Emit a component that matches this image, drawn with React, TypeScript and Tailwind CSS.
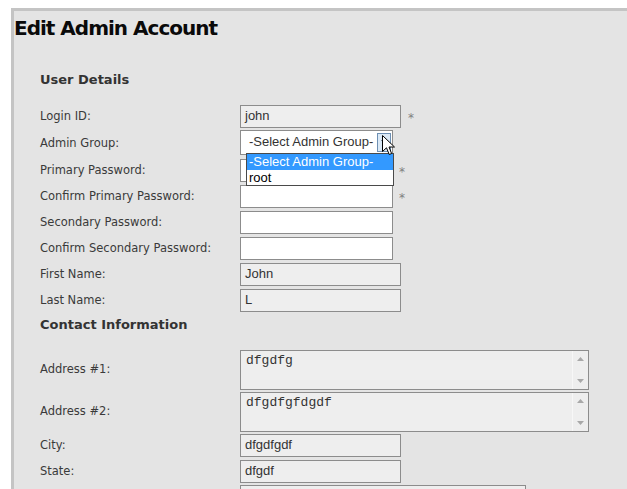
import React from "react";

const label = "w-[200px] shrink-0 mt-[2px] text-[11.5px] text-[#3a3a3a] [font-family:'DejaVu_Sans',Verdana,sans-serif]";
const inputFont = "[font-family:'Liberation_Sans',Arial,sans-serif] text-[13px] text-[#333]";

function TextBox({ value, w, white }: { value?: string; w: string; white?: boolean }) {
  return (
    <div
      className={`${w} h-[23px] border border-[#8c8c8c] ${white ? "bg-white" : "bg-[#eeeeee]"} pl-[4px] flex items-center ${inputFont}`}
    >
      {value}
    </div>
  );
}

function Star({ ml }: { ml: string }) {
  return <span className={`${ml} text-[12px] text-[#808080] [font-family:'DejaVu_Sans',sans-serif] self-start mt-[6px]`}>*</span>;
}

function Area({ value }: { value: string }) {
  return (
    <div className="w-[349px] h-[40px] border border-[#8c8c8c] bg-[#eeeeee] flex mt-[1px]">
      <div className="flex-1 pl-[5px] pt-[2px] text-[13px] leading-[16px] text-[#333] [font-family:'Liberation_Mono','Courier_New',monospace]">
        {value}
      </div>
      <div className="w-[16px] border-l border-[#f7f7f7] flex flex-col items-center justify-between py-[6px]">
        <svg width="7" height="4" viewBox="0 0 7 4"><path d="M3.5 0L7 4H0z" fill="#a8a8a8" /></svg>
        <svg width="7" height="4" viewBox="0 0 7 4"><path d="M0 0h7L3.5 4z" fill="#a8a8a8" /></svg>
      </div>
    </div>
  );
}

export default function App() {
  return (
    <div className="min-h-screen bg-white pt-[8px] pl-[11px] overflow-hidden">
      <div className="border-t-[3px] border-l-[3px] border-[#c4c4c4] bg-[#e4e4e4] min-h-[481px]">
        <h1 className="pt-[5px] text-[20px] leading-[24px] font-bold text-[#0a0a0a] tracking-[-1px] [font-family:'DejaVu_Sans',Verdana,sans-serif]">
          Edit Admin Account
        </h1>
        <div className="pl-[26px]">
          <div className="mt-[32px] h-[16px] leading-[16px] text-[13px] font-bold text-[#333] [font-family:'DejaVu_Sans',Verdana,sans-serif]">
            User Details
          </div>
          <div className="mt-[15px] flex flex-col">
            <div className="h-[26px] flex items-center">
              <span className={label}>Login ID:</span>
              <TextBox value="john" w="w-[161px]" />
              <Star ml="ml-[7px]" />
            </div>
            <div className="h-[28px] flex items-center">
              <span className={label}>Admin Group:</span>
              <div className="relative w-[153px] h-[25px] -mt-[2px] border border-[#8c8c8c] bg-white flex items-center">
                <span className={`pl-[8px] ${inputFont} text-[#111]`}>-Select Admin Group-</span>
                <div className="absolute right-[1px] top-[2px] w-[14px] h-[19px] bg-[#dbe9f6] border border-[#6d8fb3] flex items-center justify-center">
                  <svg width="7" height="4" viewBox="0 0 7 4"><path d="M0 0h7L3.5 4z" fill="#3a4a5a" /></svg>
                </div>
                <svg className="absolute left-[141px] top-[4px] z-30" width="13" height="21" viewBox="0 0 13 21">
                  <path d="M0.5 0.5V16.5L4.5 12.8L7.2 19.5L9.6 18.5L7 12H12.5Z" fill="white" stroke="black" strokeWidth="1" strokeLinejoin="miter" />
                </svg>
                <div className="absolute left-[5px] top-[22px] w-[148px] border border-[#4a4a4a] bg-white z-20">
                  <div className="h-[16px] leading-[16px] pl-[2px] bg-[#3399ff] text-white [font-family:'Liberation_Sans',Arial,sans-serif] text-[13px]">
                    -Select Admin Group-
                  </div>
                  <div className="h-[15px] leading-[15px] pl-[2px] text-black [font-family:'Liberation_Sans',Arial,sans-serif] text-[13px]">
                    root
                  </div>
                </div>
              </div>
            </div>
            <div className="h-[26px] flex items-center">
              <span className={label}>Primary Password:</span>
              <TextBox w="w-[153px]" white />
              <Star ml="ml-[6px]" />
            </div>
            <div className="h-[26px] flex items-center">
              <span className={label}>Confirm Primary Password:</span>
              <TextBox w="w-[153px]" white />
              <Star ml="ml-[6px]" />
            </div>
            <div className="h-[26px] flex items-center">
              <span className={label}>Secondary Password:</span>
              <TextBox w="w-[153px]" white />
            </div>
            <div className="h-[26px] flex items-center">
              <span className={label}>Confirm Secondary Password:</span>
              <TextBox w="w-[153px]" white />
            </div>
            <div className="h-[26px] flex items-center">
              <span className={label}>First Name:</span>
              <TextBox value="John" w="w-[161px]" />
            </div>
            <div className="h-[26px] flex items-center">
              <span className={label}>Last Name:</span>
              <TextBox value="L" w="w-[161px]" />
            </div>
          </div>
          <div className="mt-[4px] h-[16px] leading-[16px] text-[13px] font-bold text-[#333] [font-family:'DejaVu_Sans',Verdana,sans-serif]">
            Contact Information
          </div>
          <div className="mt-[15px] flex flex-col">
            <div className="h-[42px] flex items-center">
              <span className={label}>Address #1:</span>
              <Area value="dfgdfg" />
            </div>
            <div className="h-[42px] flex items-center">
              <span className={label}>Address #2:</span>
              <Area value="dfgdfgfdgdf" />
            </div>
            <div className="h-[26px] flex items-center">
              <span className={label}>City:</span>
              <TextBox value="dfgdfgdf" w="w-[161px]" />
            </div>
            <div className="h-[26px] flex items-center">
              <span className={label}>State:</span>
              <TextBox value="dfgdf" w="w-[161px]" />
            </div>
            <div className="h-[26px] flex items-start pt-[1px]">
              <span className={label}></span>
              <TextBox w="w-[286px]" />
            </div>
          </div>
        </div>
      </div>
    </div>
  );
}
